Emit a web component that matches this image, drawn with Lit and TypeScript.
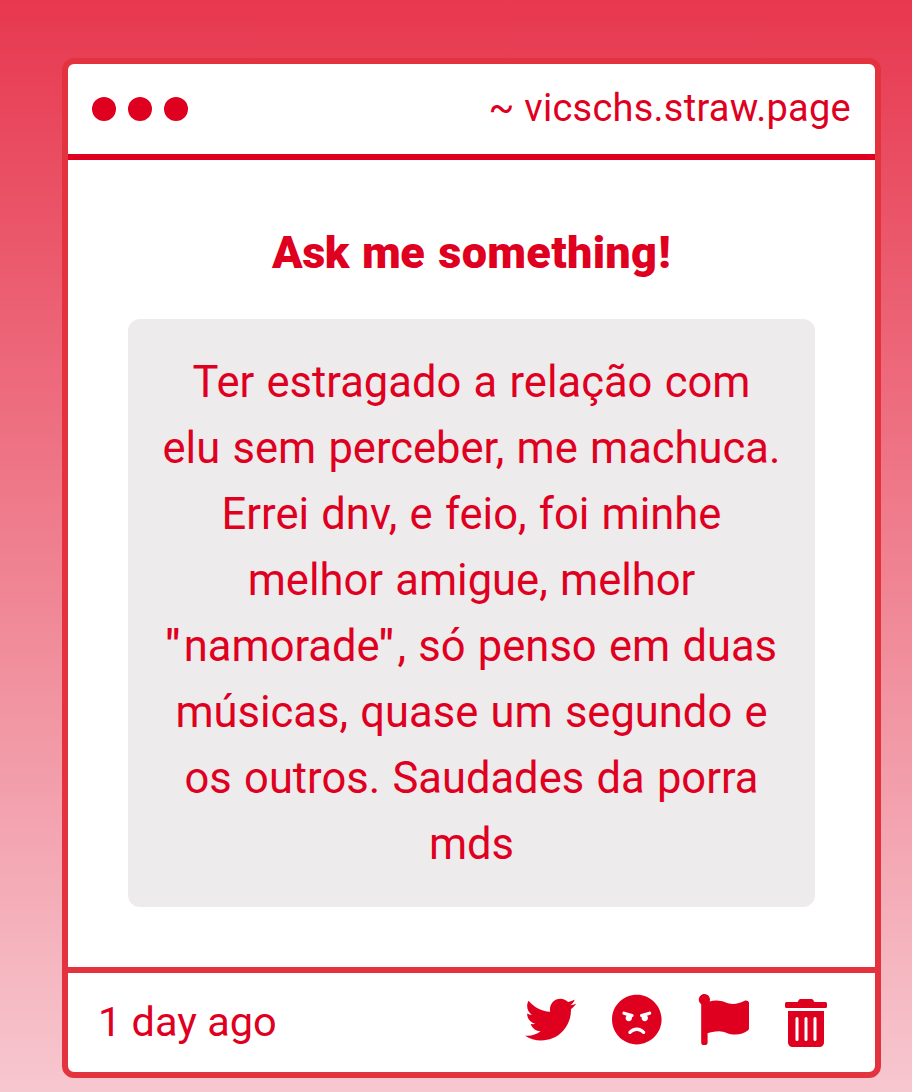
import { LitElement, html, css, svg } from "lit";
import { customElement } from "lit/decorators.js";

interface Icon {
  name: string;
  viewBox: string;
  path: string;
}

const ICONS: Icon[] = [
  {
    name: "twitter",
    viewBox: "0 0 512 512",
    path: "M459.37 151.716c.325 4.548.325 9.097.325 13.645 0 138.72-105.583 298.558-298.558 298.558-59.452 0-114.68-17.219-161.137-47.106 8.447.974 16.568 1.299 25.34 1.299 49.055 0 94.213-16.568 130.274-44.832-46.132-.975-84.792-31.188-98.112-72.772 6.498.974 12.995 1.624 19.818 1.624 9.421 0 18.843-1.3 27.614-3.573-48.081-9.747-84.143-51.98-84.143-102.985v-1.299c13.969 7.797 30.214 12.67 47.431 13.319-28.264-18.843-46.781-51.005-46.781-87.391 0-19.492 5.197-37.36 14.294-52.954 51.655 63.675 129.3 105.258 216.365 109.807-1.624-7.797-2.599-15.918-2.599-24.04 0-57.828 46.782-104.934 104.934-104.934 30.213 0 57.502 12.67 76.67 33.137 23.715-4.548 46.456-13.32 66.599-25.34-7.798 24.366-24.366 44.833-46.132 57.827 21.117-2.273 41.584-8.122 60.426-16.243-14.292 20.791-32.161 39.308-52.628 54.253z",
  },
  {
    name: "angry",
    viewBox: "0 0 496 512",
    path: "M248 8C111 8 0 119 0 256s111 248 248 248 248-111 248-248S385 8 248 8zM136 240c0-9.3 4.1-17.5 10.5-23.4l-31-9.3c-8.5-2.5-13.3-11.5-10.7-19.9 2.5-8.5 11.4-13.2 19.9-10.7l80 24c8.5 2.5 13.3 11.5 10.7 19.9-2.1 6.9-8.4 11.4-15.3 11.4-.5 0-1.1-.2-1.7-.2.7 2.7 1.7 5.3 1.7 8.2 0 17.7-14.3 32-32 32S136 257.7 136 240zm168 154.2c-27.8-33.4-84.2-33.4-112.1 0-13.5 16.3-38.2-4.2-24.6-20.5 20-24 49.4-37.8 80.6-37.8s60.6 13.8 80.6 37.8c13.8 16.5-11.1 36.6-24.5 20.5zm76.6-186.9l-31 9.3c6.3 5.8 10.5 14.1 10.5 23.4 0 17.7-14.3 32-32 32s-32-14.3-32-32c0-2.9.9-5.6 1.7-8.2-.6.1-1.1.2-1.7.2-6.9 0-13.2-4.5-15.3-11.4-2.5-8.5 2.3-17.4 10.7-19.9l80-24c8.4-2.5 17.4 2.3 19.9 10.7 2.5 8.5-2.3 17.4-10.8 19.9z",
  },
  {
    name: "flag",
    viewBox: "0 0 512 512",
    path: "M349.565 98.783C295.978 98.783 251.721 64 184.348 64c-24.955 0-47.309 4.384-68.045 12.013a55.947 55.947 0 0 0 3.586-23.562C118.117 24.015 94.806 1.206 66.338.048 34.345-1.254 8 24.296 8 56c0 19.026 9.497 35.825 24 45.945V488c0 13.255 10.745 24 24 24h16c13.255 0 24-10.745 24-24v-94.4c28.311-12.064 63.582-22.122 114.435-22.122 53.588 0 97.844 34.783 165.217 34.783 48.169 0 86.667-16.294 122.505-40.858C506.84 359.452 512 349.571 512 339.045v-243.1c0-23.393-24.269-38.87-45.485-29.016-34.338 15.948-76.454 31.854-116.95 31.854z",
  },
  {
    name: "trash",
    viewBox: "0 0 448 512",
    path: "M32 464a48 48 0 0 0 48 48h288a48 48 0 0 0 48-48V128H32zm272-256a16 16 0 0 1 32 0v224a16 16 0 0 1-32 0zm-96 0a16 16 0 0 1 32 0v224a16 16 0 0 1-32 0zm-96 0a16 16 0 0 1 32 0v224a16 16 0 0 1-32 0zM432 32H312l-9.4-18.7A24 24 0 0 0 281.1 0H166.8a23.72 23.72 0 0 0-21.4 13.3L136 32H16A16 16 0 0 0 0 48v32a16 16 0 0 0 16 16h416a16 16 0 0 0 16-16V48a16 16 0 0 0-16-16z",
  },
];

const quote = html`<span class="quote">"</span>`;

const MESSAGE = [
  "Ter estragado a relação com",
  "elu sem perceber, me machuca.",
  "Errei dnv, e feio, foi minhe",
  "melhor amigue, melhor",
  html`${quote}namorade${quote}, só penso em duas`,
  "músicas, quase um segundo e",
  "os outros. Saudades da porra",
  "mds",
];

@customElement("app-root")
export class AppRoot extends LitElement {
  static styles = css`
    :host {
      display: block;
      box-sizing: border-box;
      height: 1092px;
      padding: 58px 31px 14px 62px;
      overflow: hidden;
      background: linear-gradient(#e7384f, #f7c7cf);
      color: #df001f;
      font-family: Roboto, sans-serif;
    }
    .card {
      box-sizing: border-box;
      height: 1020px;
      display: flex;
      flex-direction: column;
      border: 6px solid #e2333f;
      border-radius: 12px;
      background: #fff;
    }
    .bar {
      display: flex;
      align-items: center;
      justify-content: space-between;
      height: 90px;
      padding: 0 24px;
      border-bottom: 6px solid #df001f;
    }
    .dots {
      display: flex;
      gap: 12px;
    }
    .dot {
      width: 24px;
      height: 24px;
      border-radius: 50%;
      background: #df001f;
    }
    .site {
      padding-bottom: 2px;
      font-size: 38px;
      line-height: 48px;
      letter-spacing: 0.25px;
      white-space: nowrap;
    }
    .body {
      flex: 1;
      display: flex;
      flex-direction: column;
      padding: 60px;
      text-align: center;
    }
    .title {
      margin: 0 0 33px;
      font-size: 45px;
      line-height: 66px;
      font-weight: 900;
      letter-spacing: 0.3px;
      word-spacing: 2.5px;
    }
    .lead {
      letter-spacing: -0.5px;
    }
    .bang {
      margin-left: 1px;
    }
    .message {
      flex: 1;
      padding: 31px 0 29px;
      border-radius: 12px;
      background: #edebec;
      font-size: 43.5px;
      line-height: 66px;
      word-spacing: 1.5px;
      white-space: nowrap;
    }
    .quote {
      font-weight: 600;
      letter-spacing: 4px;
    }
    .foot {
      display: flex;
      align-items: center;
      justify-content: space-between;
      height: 99px;
      padding: 0 48px 0 30px;
      border-top: 6px solid #e2333f;
    }
    .age {
      font-size: 41.5px;
      line-height: 60px;
      padding-bottom: 1px;
    }
    .actions {
      display: flex;
      align-items: flex-start;
      gap: 36px;
      margin-bottom: 4px;
    }
    .icon {
      display: block;
      height: 51.2px;
      fill: currentColor;
    }
    .icon.trash {
      height: 48px;
      margin-top: 4.8px;
    }
  `;

  render() {
    return html`
      <main class="card">
        <header class="bar">
          <div class="dots">
            <span class="dot"></span><span class="dot"></span><span class="dot"></span>
          </div>
          <div class="site">~ vicschs.straw.page</div>
        </header>
        <section class="body">
          <h1 class="title"><span class="lead">Ask me</span> something<span class="bang">!</span></h1>
          <div class="message">${MESSAGE.map((line) => html`<div>${line}</div>`)}</div>
        </section>
        <footer class="foot">
          <div class="age">1 day ago</div>
          <div class="actions">
            ${ICONS.map(
              (icon) => html`<svg class="icon ${icon.name}" viewBox=${icon.viewBox}>
                ${svg`<path d=${icon.path}></path>`}
              </svg>`
            )}
          </div>
        </footer>
      </main>
    `;
  }
}
